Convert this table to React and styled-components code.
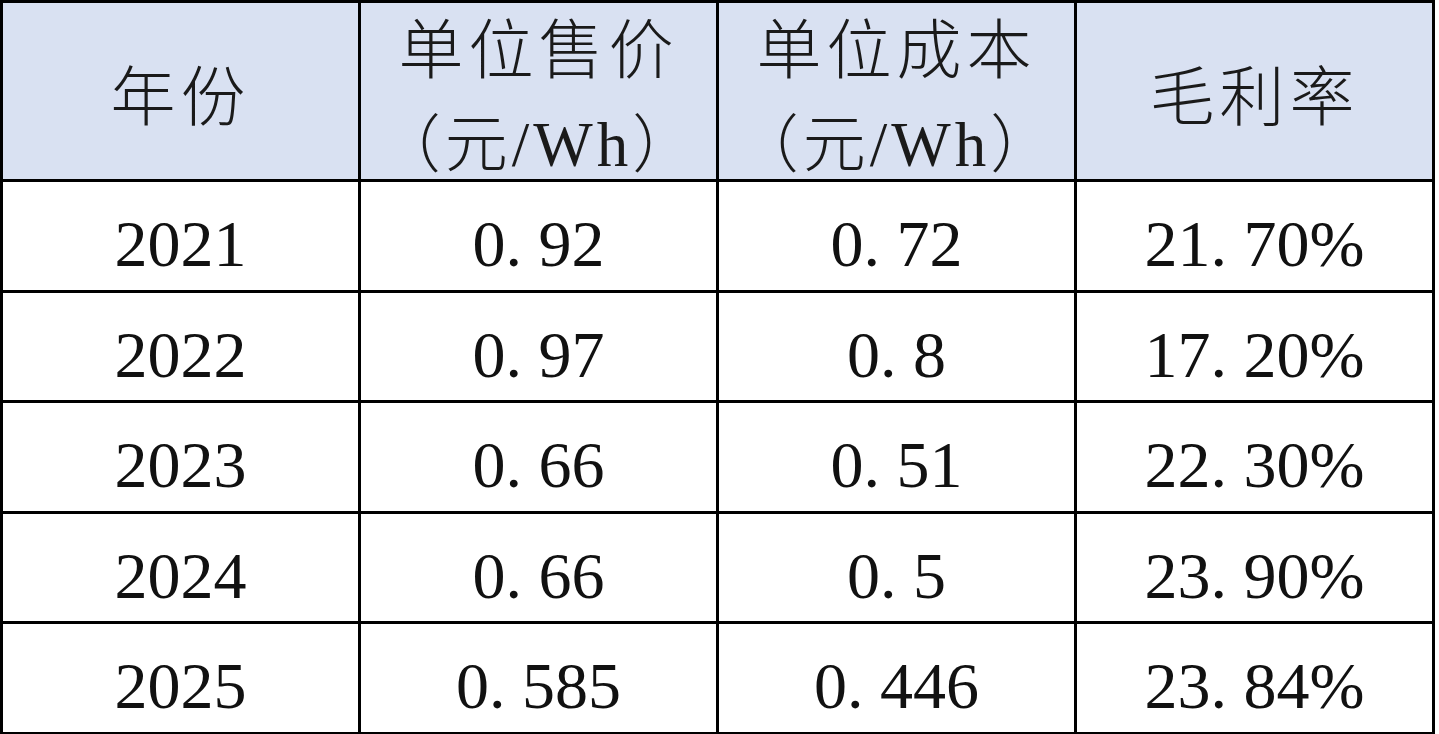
import React from "react";
import styled, { createGlobalStyle } from "styled-components";

const Global = createGlobalStyle`
  html, body { margin: 0; padding: 0; background: #ffffff; }
  body { font-family: "Liberation Serif", "Noto Sans CJK SC", serif; color: #111; }
`;

const Table = styled.table`
  width: 1435px;
  border-collapse: collapse;
  table-layout: fixed;
  border: 3px solid #000;
`;

const HeadCell = styled.th`
  background: #d9e1f2;
  border: 3px solid #000;
  height: ${(p) => (p.$twoLine ? "176px" : "162px")};
  padding: ${(p) => (p.$twoLine ? "0" : "14px 0 0 0")};
  font-weight: 300;
  font-size: 65px;
  line-height: 96px;
  letter-spacing: 5px;
  text-align: center;
  vertical-align: ${(p) => (p.$twoLine ? "top" : "middle")};
  color: #1a1a1a;
  font-family: "Liberation Serif", "Noto Sans CJK SC", serif;
`;

const Unit = styled.span`
  display: block;
  height: 80px;
  line-height: 92px;
  letter-spacing: 4px;
  font-size: 63px;
`;

const Cell = styled.td`
  border: 3px solid #000;
  height: 90.5px;
  padding: 17px 0 0 0;
  font-size: 66px;
  line-height: 80px;
  text-align: center;
  vertical-align: middle;
  color: #111;
  background: #fff;
  white-space: pre;
`;

const data = [
  ["2021", "0. 92", "0. 72", "21. 70%"],
  ["2022", "0. 97", "0. 8", "17. 20%"],
  ["2023", "0. 66", "0. 51", "22. 30%"],
  ["2024", "0. 66", "0. 5", "23. 90%"],
  ["2025", "0. 585", "0. 446", "23. 84%"],
];

export default function App() {
  return (
    <>
      <Global />
      <Table>
        <colgroup>
          <col style={{ width: "25%" }} />
          <col style={{ width: "25%" }} />
          <col style={{ width: "25%" }} />
          <col style={{ width: "25%" }} />
        </colgroup>
        <thead>
          <tr>
            <HeadCell>年份</HeadCell>
            <HeadCell $twoLine>
              单位售价
              <Unit>（元/Wh）</Unit>
            </HeadCell>
            <HeadCell $twoLine>
              单位成本
              <Unit>（元/Wh）</Unit>
            </HeadCell>
            <HeadCell>毛利率</HeadCell>
          </tr>
        </thead>
        <tbody>
          {data.map((row) => (
            <tr key={row[0]}>
              {row.map((v, i) => (
                <Cell key={i}>{v}</Cell>
              ))}
            </tr>
          ))}
        </tbody>
      </Table>
    </>
  );
}
